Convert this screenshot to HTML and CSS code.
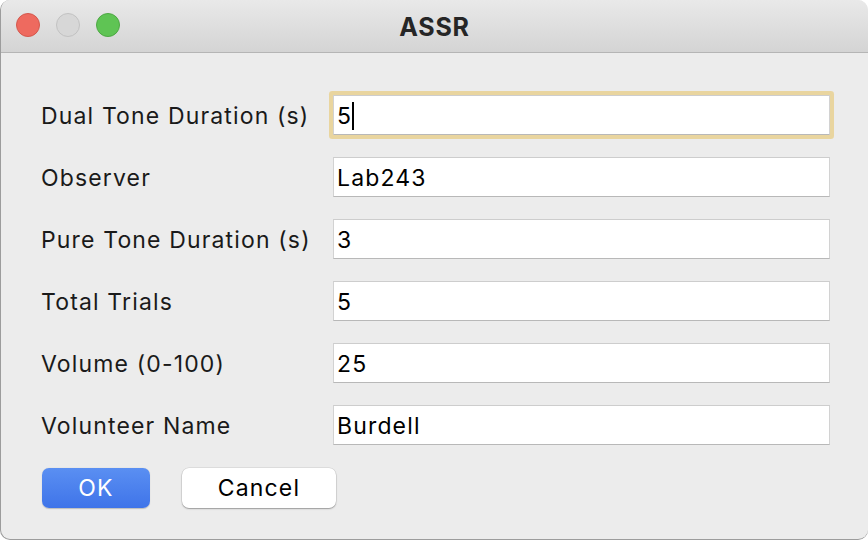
FILE: index.html
```html
<!DOCTYPE html>
<html>
<head>
<meta charset="utf-8">
<link rel="stylesheet" href="styles.css">
</head>
<body>
<div class="window">
  <div class="titlebar">
    <div class="lights">
      <span class="light red"></span>
      <span class="light gray"></span>
      <span class="light green"></span>
    </div>
    <div class="title">ASSR</div>
  </div>
  <div class="content">
    <div class="form">
      <label class="label">Dual Tone Duration (s)</label>
      <div class="field focused">5<span class="caret"></span></div>
      <label class="label">Observer</label>
      <div class="field">Lab243</div>
      <label class="label">Pure Tone Duration (s)</label>
      <div class="field">3</div>
      <label class="label">Total Trials</label>
      <div class="field">5</div>
      <label class="label">Volume (0-100)</label>
      <div class="field">25</div>
      <label class="label">Volunteer Name</label>
      <div class="field">Burdell</div>
    </div>
    <div class="buttons">
      <button class="btn ok">OK</button>
      <button class="btn cancel">Cancel</button>
    </div>
  </div>
</div>
</body>
</html>
```
FILE: styles.css
```css
html, body {
  margin: 0;
  padding: 0;
  background: #ffffff;
}
body {
  width: 868px;
  height: 540px;
  overflow: hidden;
  font-family: Inter, "Liberation Sans", Arial, sans-serif;
}
.window {
  width: 868px;
  height: 540px;
  box-sizing: border-box;
  background: #ececec;
  border-radius: 10px;
  border-left: 1px solid #9c9c9c;
  border-bottom: 1px solid #9c9c9c;
  overflow: hidden;
  display: flex;
  flex-direction: column;
}
.titlebar {
  height: 52px;
  flex: none;
  background: linear-gradient(#e9e9e9, #d4d4d4);
  border-bottom: 1px solid #b5b5b5;
  position: relative;
  display: flex;
  align-items: center;
  justify-content: center;
}
.lights {
  position: absolute;
  left: 15px;
  top: 13px;
  display: flex;
  gap: 16px;
}
.light {
  width: 24px;
  height: 24px;
  border-radius: 50%;
  box-sizing: border-box;
}
.red { background: #ee6a5f; border: 1px solid #d4584d; }
.gray { background: #d7d7d7; border: 1px solid #c2c2c2; }
.green { background: #5fc454; border: 1px solid #4ea844; }
.title {
  font-weight: bold;
  font-size: 25px;
  letter-spacing: 0.8px;
  color: #262626;
  padding-top: 1px;
}
.content {
  padding: 42px 0 0 40px;
}
.form {
  display: grid;
  grid-template-columns: 292px 497px;
  grid-auto-rows: 40px;
  row-gap: 22px;
  align-items: center;
}
.label, .field, .btn {
  font-family: Inter, "Liberation Sans", Arial, sans-serif;
  font-size: 23px;
  letter-spacing: 1.15px;
}
.label {
  color: #1a1a1a;
  white-space: nowrap;
  padding-top: 2px;
}
.field {
  height: 40px;
  box-sizing: border-box;
  background: #fff;
  border: 1px solid #d2d2d2;
  border-top-color: #cdcdcd;
  border-bottom: 1px solid #b8b8b8;
  color: #000;
  padding: 1px 0 0 3px;
  display: flex;
  align-items: center;
}
.field.focused {
  box-shadow: 0 0 0 4px #e9d59f;
  border-radius: 1px;
}
.caret {
  display: inline-block;
  width: 2px;
  height: 28px;
  background: #000;
  margin-left: 0;
}
.buttons {
  display: flex;
  gap: 32px;
  margin-top: 23px;
  padding-left: 1px;
}
.btn {
  height: 40px;
  border: none;
  border-radius: 7px;
  padding: 0;
}
.ok {
  width: 108px;
  color: #fff;
  background: linear-gradient(#5a8ff2, #3f74e9);
  box-shadow: 0 0.5px 1px rgba(0,0,0,0.2);
}
.cancel {
  width: 154px;
  color: #000;
  background: #fff;
  box-shadow: 0 0 0 0.5px rgba(0,0,0,0.12), 0 1px 1.5px rgba(0,0,0,0.3);
}
```
